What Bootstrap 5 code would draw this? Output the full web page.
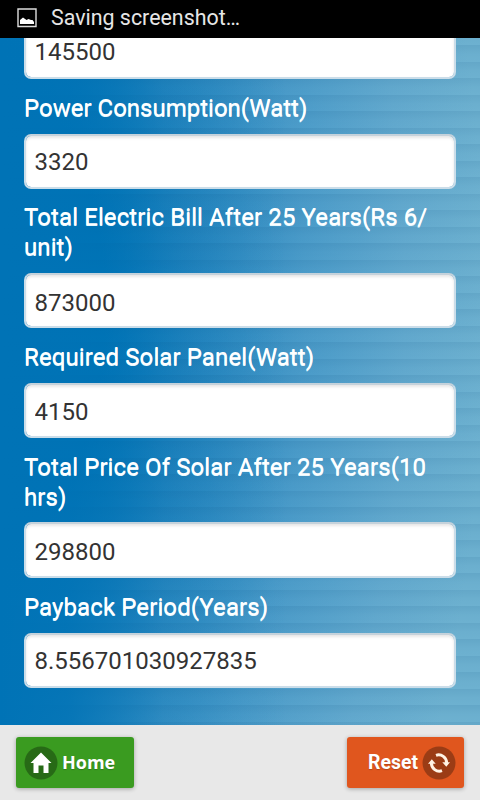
<!DOCTYPE html>
<html lang="en">
<head>
<meta charset="utf-8">
<meta name="viewport" content="width=device-width, initial-scale=1">
<title>Solar Calculator</title>
<link href="https://cdn.jsdelivr.net/npm/bootstrap@5.3.0/dist/css/bootstrap.min.css" rel="stylesheet">
<style>
body{font-family:Roboto,sans-serif;height:800px;background:#e8e8e8}
.status{height:38px;background:#000;color:#e6e6e6;font-size:21.4px;padding:0 0 2px 17px;gap:14px;line-height:1}
.calc{min-height:0;padding:0 24px 37px;
 background:
 linear-gradient(90deg,#0073b6 0,rgba(0,115,182,.85) 14%,rgba(0,115,182,.2) 34%,transparent 60%),
 repeating-linear-gradient(180deg,rgba(0,65,115,.09) 0,rgba(0,65,115,.02) 9px,transparent 16.5px) 0 -9.3px / 100% 750px,
 radial-gradient(ellipse 500px 1000px at -15px 270px,#0073b6 0,#0074b6 24%,#2585be 42%,#4a9bc9 64%,#62a9ce 84%,#6db1d0 100%)}
.calc label{color:#fff;font-size:24px;line-height:30px;padding:14px 0 11px;letter-spacing:.1px;text-shadow:0 1px 0 #e6f8ff}
.calc label.first-label{letter-spacing:0}
.calc .bill-label{padding-top:13px}
.calc .price-label{padding-bottom:10px}
.calc .form-control{height:55px;flex:none;font-size:24px;line-height:30px;color:#333;padding:2px 9px 0 8.5px;border:2px solid #cbdde9;border-top-color:#c5d2db;border-radius:7px;box-shadow:inset 0 2px 3px rgba(0,0,0,.1)}
.calc .raised{padding-top:0}
.calc .lowered{padding-top:4px}
.calc .taller{height:56px;padding-top:3px}
.footer-bar{height:75px;padding:0 16px;background:#e8e8e8}
.footer-bar .btn{width:118px;height:51px;border:0;border-radius:3px;padding:0 8px;color:#fff;font-weight:700;font-size:18px;box-shadow:0 1px 4px rgba(0,0,0,.3);text-shadow:0 1px 1px rgba(0,0,0,.2)}
.footer-bar .go-home{background:#3a9b20;font-family:"Open Sans",sans-serif}
.footer-bar .go-reset{background:#e0561e;width:117px;font-size:19.4px}
</style>
</head>
<body class="d-flex flex-column overflow-hidden">
<header class="status d-flex align-items-center flex-shrink-0">
 <svg width="20" height="20" viewBox="0 0 20 20"><path fill="none" stroke="#ddd" stroke-width="1.4" d="M1 1h18v17.5H1z"/><path fill="#fff" d="M3 16v-4l3-2.5 3.5 2.5 2-1 2.5 1 1.5 0 1.5 2v2z"/></svg>
 <span>Saving screenshot…</span>
</header>
<main class="calc flex-grow-1 d-flex flex-column justify-content-end overflow-hidden">
 <input class="form-control raised" aria-label="Electric bill" value="145500">
 <label for="f1" class="first-label">Power Consumption(Watt)</label>
 <input class="form-control raised" id="f1" value="3320">
 <label for="f2" class="bill-label">Total Electric Bill After 25 Years(Rs 6/<wbr>unit)</label>
 <input class="form-control lowered" id="f2" value="873000">
 <label for="f3">Required Solar Panel(Watt)</label>
 <input class="form-control" id="f3" value="4150">
 <label for="f4" class="price-label">Total Price Of Solar After 25 Years(10 hrs)</label>
 <input class="form-control taller" id="f4" value="298800">
 <label for="f5">Payback Period(Years)</label>
 <input class="form-control raised" id="f5" value="8.556701030927835">
</main>
<footer class="footer-bar d-flex align-items-center justify-content-between flex-shrink-0">
 <button class="btn go-home d-flex align-items-center gap-1">
  <svg width="34" height="34" viewBox="0 0 34 34" class="flex-shrink-0"><circle cx="17" cy="17" r="16.5" fill="#276a16"/><path fill="#fff" d="M17 6.5 6.5 17h3v10h5v-7.5h5V27h5V17h3z"/></svg>
  <span>Home</span>
 </button>
 <button class="btn go-reset d-flex align-items-center justify-content-end gap-1">
  <span>Reset</span>
  <svg width="34" height="34" viewBox="0 0 34 34" class="flex-shrink-0"><circle cx="17" cy="17" r="16.5" fill="#9b3c15"/><g fill="none" stroke="#fff3e4" stroke-width="3"><path d="M14 9.3A8 8 0 0 1 24.6 17"/><path d="M20 24.7A8 8 0 0 1 9.4 17"/></g><path fill="#fff3e4" d="M20.3 16.3h7.7l-3.7 4.5zM6 17.7h7.7l-3.9-4.5z"/></svg>
 </button>
</footer>
<script src="https://cdn.jsdelivr.net/npm/bootstrap@5.3.0/dist/js/bootstrap.bundle.min.js"></script>
</body>
</html>
